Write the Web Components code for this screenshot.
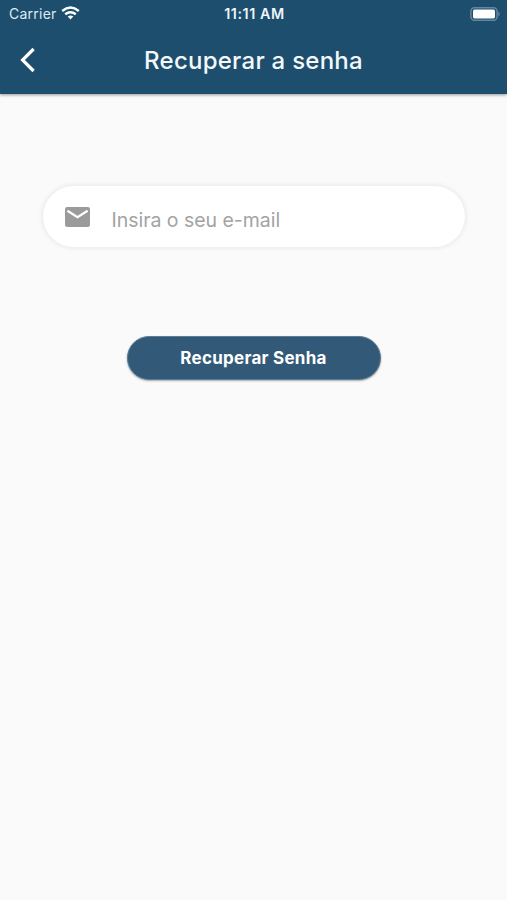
<!DOCTYPE html>
<html lang="pt"><head><meta charset="utf-8"><title>Recuperar a senha</title>
<style>html,body{margin:0;height:100%;background:#fafafa;font-family:Inter,"Liberation Sans",sans-serif}</style></head><body>
<recover-screen></recover-screen>
<script>
const define=(name,html)=>customElements.define(name,class extends HTMLElement{
  constructor(){super();this.attachShadow({mode:"open"}).innerHTML=html;}
});
define("status-bar",`<style>
:host{display:grid;grid-template-columns:1fr auto 1fr;align-items:center;height:27px;padding:0 6px 0 9px;color:#dfeaf1;font-size:14px;line-height:28px}
.l{display:flex;align-items:center;gap:4.5px;letter-spacing:.25px}.l svg{margin-top:-2px}.t{font-weight:600;font-size:14.3px;letter-spacing:.6px;color:#eef5f9;margin-left:-1px}.b{justify-self:end;display:flex;margin-top:-1px}
</style><div class="l"><span>Carrier</span><svg width="19" height="14" viewBox="0 0 19 14" fill="none" stroke="#fff" stroke-width="2.4"><path d="M1.2 5Q9.5-1.8 17.8 5M4.2 8.3Q9.5 4 14.8 8.3"/><path d="M6.7 10.5Q9.5 8.3 12.3 10.5L9.5 13.5Z" fill="#fff" stroke="none"/></svg></div>
<span class="t">11:11 AM</span>
<svg class="b" width="31" height="14" viewBox="0 0 31 14"><rect x=".9" y=".8" width="26.2" height="12.4" rx="3.6" fill="none" stroke="#6487a0" stroke-width="1.5"/><rect x="3" y="2.6" width="22" height="8.8" rx="1.6" fill="#fff"/><path d="M28.3 4.6Q31.5 7 28.3 9.4Z" fill="#6487a0"/></svg>`);
define("nav-bar",`<style>
:host{display:grid;grid-template-columns:56px 1fr 56px;align-items:center;height:66px;padding-bottom:1px;color:#f4f8fa}
h1{margin:0;text-align:center;font-size:24px;font-weight:500;letter-spacing:.25px;white-space:nowrap}
svg{display:block;margin-left:20px}
</style><svg width="16" height="26" viewBox="0 0 16 26" fill="none" stroke="#fff" stroke-width="3.2"><path d="M13.6 2L2.6 13L13.6 24"/></svg><h1><slot></slot></h1>`);
define("email-field",`<style>
:host{display:flex;align-items:center;box-sizing:border-box;width:422px;height:61px;padding-left:22px;gap:22px;border-radius:31px;background:#fff;box-shadow:0 0 5px 1px #00000014;color:#a3a3a3;font-size:19.5px}
span{padding-top:6px;letter-spacing:-.03px}
</style><svg width="25" height="20" viewBox="0 0 25 20"><rect width="25" height="20" rx="2.2" fill="#9b9b9b"/><path d="M2.4 3.8L12.5 10.1L22.6 3.8" fill="none" stroke="#fff" stroke-width="2.2"/></svg><span><slot></slot></span>`);
define("pill-button",`<style>
:host{display:flex;align-items:center;justify-content:center;box-sizing:border-box;width:254px;height:44px;border-radius:22px;background:#325a78;border:1px solid #5c7c94;box-shadow:0 1px 2px #0005;color:#fff;font-size:17px;font-weight:700;letter-spacing:.28px}
</style><slot></slot>`);
define("recover-screen",`<style>
:host{display:flex;flex-direction:column;min-height:100vh;background:#fafafa}
header{background:#1d4e6e;box-shadow:0 1px 3px #0006}
main{display:flex;flex-direction:column;align-items:center;padding-top:92px;gap:89px}
</style><header><status-bar></status-bar><nav-bar>Recuperar a senha</nav-bar></header><main><email-field>Insira o seu e-mail</email-field><pill-button>Recuperar Senha</pill-button></main>`);
</script></body></html>
